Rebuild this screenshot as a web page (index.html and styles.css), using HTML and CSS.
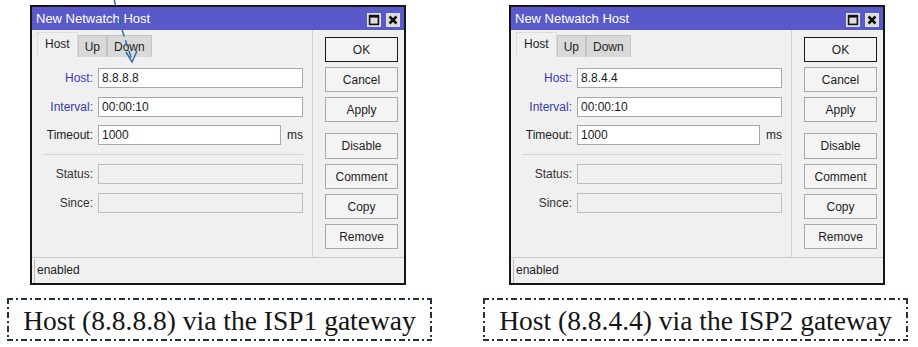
FILE: index.html
```html
<!DOCTYPE html>
<html lang="en">
<head>
    <meta charset="UTF-8">
    <title>Netwatch Hosts</title>
    <link rel="stylesheet" href="styles.css">
</head>
<body>
    <div class="windows">
        <div class="window">
            <div class="titlebar">
                <span class="title">New Netwatch Host</span>
                <div class="title-btns">
                    <span class="tbtn">
                        <svg width="14" height="14" viewBox="0 0 14 14"><rect x="2.6" y="2.6" width="8.8" height="8.8" fill="none" stroke="#111" stroke-width="1.6"/><rect x="2" y="2" width="10" height="2.6" fill="#111"/></svg>
                    </span>
                    <span class="tbtn">
                        <svg width="14" height="14" viewBox="0 0 14 14"><path d="M3.5 3.5 L10.5 10.5 M10.5 3.5 L3.5 10.5" stroke="#111" stroke-width="2.6"/></svg>
                    </span>
                </div>
            </div>
            <div class="win-body">
                <div class="main">
                    <div class="tabs">
                        <span class="tab active">Host</span>
                        <span class="tab">Up</span>
                        <span class="tab">Down</span>
                    </div>
                    <div class="panel">
                        <div class="row"><span class="lbl blue">Host:</span><span class="field">8.8.8.8</span></div>
                        <div class="row"><span class="lbl blue">Interval:</span><span class="field">00:00:10</span></div>
                        <div class="row"><span class="lbl">Timeout:</span><span class="field short">1000</span><span class="unit">ms</span></div>
                        <div class="sep"></div>
                        <div class="row"><span class="lbl grey">Status:</span><span class="field off"></span></div>
                        <div class="row"><span class="lbl grey">Since:</span><span class="field off"></span></div>
                    </div>
                </div>
                <div class="actions">
                    <button class="btn default">OK</button>
                    <button class="btn">Cancel</button>
                    <button class="btn">Apply</button>
                    <button class="btn spaced">Disable</button>
                    <button class="btn">Comment</button>
                    <button class="btn">Copy</button>
                    <button class="btn">Remove</button>
                </div>
            </div>
            <div class="statusbar"><span>enabled</span></div>
            <!-- annotation arrow pointing at the Host field -->
            <svg class="arrow" width="40" height="75" viewBox="0 0 40 75">
                <path d="M12 -2 C15 16 22 36 30 60" fill="none" stroke="#2f6ea6" stroke-width="1.5" stroke-dasharray="7 4"/>
                <path d="M24 52 L30 62 L35 51" fill="none" stroke="#2f6ea6" stroke-width="1.5"/>
            </svg>
        </div>

        <div class="window">
            <div class="titlebar">
                <span class="title">New Netwatch Host</span>
                <div class="title-btns">
                    <span class="tbtn">
                        <svg width="14" height="14" viewBox="0 0 14 14"><rect x="2.6" y="2.6" width="8.8" height="8.8" fill="none" stroke="#111" stroke-width="1.6"/><rect x="2" y="2" width="10" height="2.6" fill="#111"/></svg>
                    </span>
                    <span class="tbtn">
                        <svg width="14" height="14" viewBox="0 0 14 14"><path d="M3.5 3.5 L10.5 10.5 M10.5 3.5 L3.5 10.5" stroke="#111" stroke-width="2.6"/></svg>
                    </span>
                </div>
            </div>
            <div class="win-body">
                <div class="main">
                    <div class="tabs">
                        <span class="tab active">Host</span>
                        <span class="tab">Up</span>
                        <span class="tab">Down</span>
                    </div>
                    <div class="panel">
                        <div class="row"><span class="lbl blue">Host:</span><span class="field">8.8.4.4</span></div>
                        <div class="row"><span class="lbl blue">Interval:</span><span class="field">00:00:10</span></div>
                        <div class="row"><span class="lbl">Timeout:</span><span class="field short">1000</span><span class="unit">ms</span></div>
                        <div class="sep"></div>
                        <div class="row"><span class="lbl grey">Status:</span><span class="field off"></span></div>
                        <div class="row"><span class="lbl grey">Since:</span><span class="field off"></span></div>
                    </div>
                </div>
                <div class="actions">
                    <button class="btn default">OK</button>
                    <button class="btn">Cancel</button>
                    <button class="btn">Apply</button>
                    <button class="btn spaced">Disable</button>
                    <button class="btn">Comment</button>
                    <button class="btn">Copy</button>
                    <button class="btn">Remove</button>
                </div>
            </div>
            <div class="statusbar"><span>enabled</span></div>
        </div>
    </div>

    <div class="captions">
        <div class="caption navy">Host (8.8.8.8) via the ISP1 gateway</div>
        <div class="caption brown">Host (8.8.4.4) via the ISP2 gateway</div>
    </div>
</body>
</html>
```

FILE: styles.css
```css
/* styles.css */
body {
    margin: 0;
    width: 918px;
    height: 347px;
    background: #fff;
    font-family: 'Liberation Sans', Arial, sans-serif;
    overflow: hidden;
}

.windows {
    display: flex;
    gap: 103px;
    padding: 5px 0 0 30px;
}

.window {
    position: relative;
    box-sizing: border-box;
    width: 376px;
    height: 280px;
    border: 2px solid #161616;
    background: #f0f0f0;
    display: flex;
    flex-direction: column;
}

.titlebar {
    height: 23px;
    background: #5959c9;
    display: flex;
    align-items: center;
    justify-content: space-between;
    padding: 0 4px 0 4px;
}

.title {
    color: #fff;
    font-size: 13px;
}

.title-btns {
    display: flex;
    gap: 5px;
    padding-top: 3px;
}

.tbtn {
    width: 14px;
    height: 14px;
    background: #dedede;
    display: block;
}

.tbtn svg {
    display: block;
}

.win-body {
    display: flex;
    height: 227px;
}

.main {
    width: 280px;
    border-right: 1px solid #d2d2d2;
    display: flex;
    flex-direction: column;
}

.tabs {
    display: flex;
    align-items: flex-end;
    height: 25px;
    margin-top: 2px;
    padding-left: 5px;
}

.tab {
    font-size: 12px;
    color: #1e1e1e;
    height: 22px;
    line-height: 22px;
    box-sizing: border-box;
    padding: 0 6px;
    background: #d9d9d9;
    border: 1px solid #c4c4c4;
    border-bottom: none;
}

.tab.active {
    height: 25px;
    line-height: 23px;
    background: #f0f0f0;
    border-color: #dcdcdc;
    padding: 0 7px;
}

.panel {
    flex: 1;
    padding-top: 11px;
}

.row {
    display: flex;
    align-items: center;
    height: 20px;
    margin-bottom: 9px;
}

.row:nth-child(2) {
    margin-bottom: 8px;
}

.lbl {
    width: 61px;
    text-align: right;
    font-size: 12px;
    color: #222;
    margin-right: 5px;
}

.lbl.blue {
    color: #3a3ab6;
}

.lbl.grey {
    color: #333;
}

.field {
    box-sizing: border-box;
    width: 205px;
    height: 20px;
    border: 1px solid #a8a8a8;
    background: #fff;
    font-size: 12px;
    line-height: 18px;
    padding-left: 3px;
    color: #1a1a1a;
}

.field.short {
    width: 183px;
}

.field.off {
    background: #f0f0f0;
    border-color: #bdbdbd;
}

.unit {
    font-size: 12px;
    color: #222;
    margin-left: 6px;
}

.sep {
    height: 1px;
    background: #d4d4d4;
    margin: 3px 9px 9px 11px;
}

.actions {
    display: flex;
    flex-direction: column;
    gap: 5px;
    padding-top: 7px;
    margin-left: 12px;
}

.btn {
    width: 73px;
    height: 25px;
    margin: 0;
    padding: 0;
    font-family: 'Liberation Sans', Arial, sans-serif;
    font-size: 12px;
    color: #1e1e1e;
    background: #f4f4f4;
    border: 1px solid #a9a9a9;
}

.btn.default {
    border-color: #1c1c1c;
}

.btn.spaced {
    margin-top: 6px;
    height: 26px;
}

.statusbar {
    flex: 1;
    border-top: 1px solid #c9c9c9;
    padding: 1px 2px 0 2px;
    display: flex;
}

.statusbar span {
    flex: 1;
    border-left: 1px solid #b9b9b9;
    font-size: 12px;
    color: #1e1e1e;
    line-height: 22px;
    padding-left: 2px;
}

.arrow {
    position: absolute;
    left: 70px;
    top: -7px;
    overflow: visible;
}

.captions {
    display: flex;
    gap: 51px;
    padding: 13px 0 0 7px;
}

.caption {
    --c: #243040;
    box-sizing: border-box;
    width: 425px;
    height: 43px;
    text-align: center;
    font-family: 'Liberation Serif', 'Times New Roman', serif;
    font-size: 27.5px;
    line-height: 45px;
    color: #141414;
    background:
        repeating-linear-gradient(90deg, var(--c) 0 6px, transparent 6px 9px, var(--c) 9px 11px, transparent 11px 14px) left top / 100% 2px no-repeat,
        repeating-linear-gradient(90deg, var(--c) 0 6px, transparent 6px 9px, var(--c) 9px 11px, transparent 11px 14px) left bottom / 100% 2px no-repeat,
        repeating-linear-gradient(180deg, var(--c) 0 6px, transparent 6px 9px, var(--c) 9px 11px, transparent 11px 14px) left top / 2px 100% no-repeat,
        repeating-linear-gradient(180deg, var(--c) 0 6px, transparent 6px 9px, var(--c) 9px 11px, transparent 11px 14px) right top / 2px 100% no-repeat;
}

.caption.brown {
    --c: #3d2a2a;
}
```
